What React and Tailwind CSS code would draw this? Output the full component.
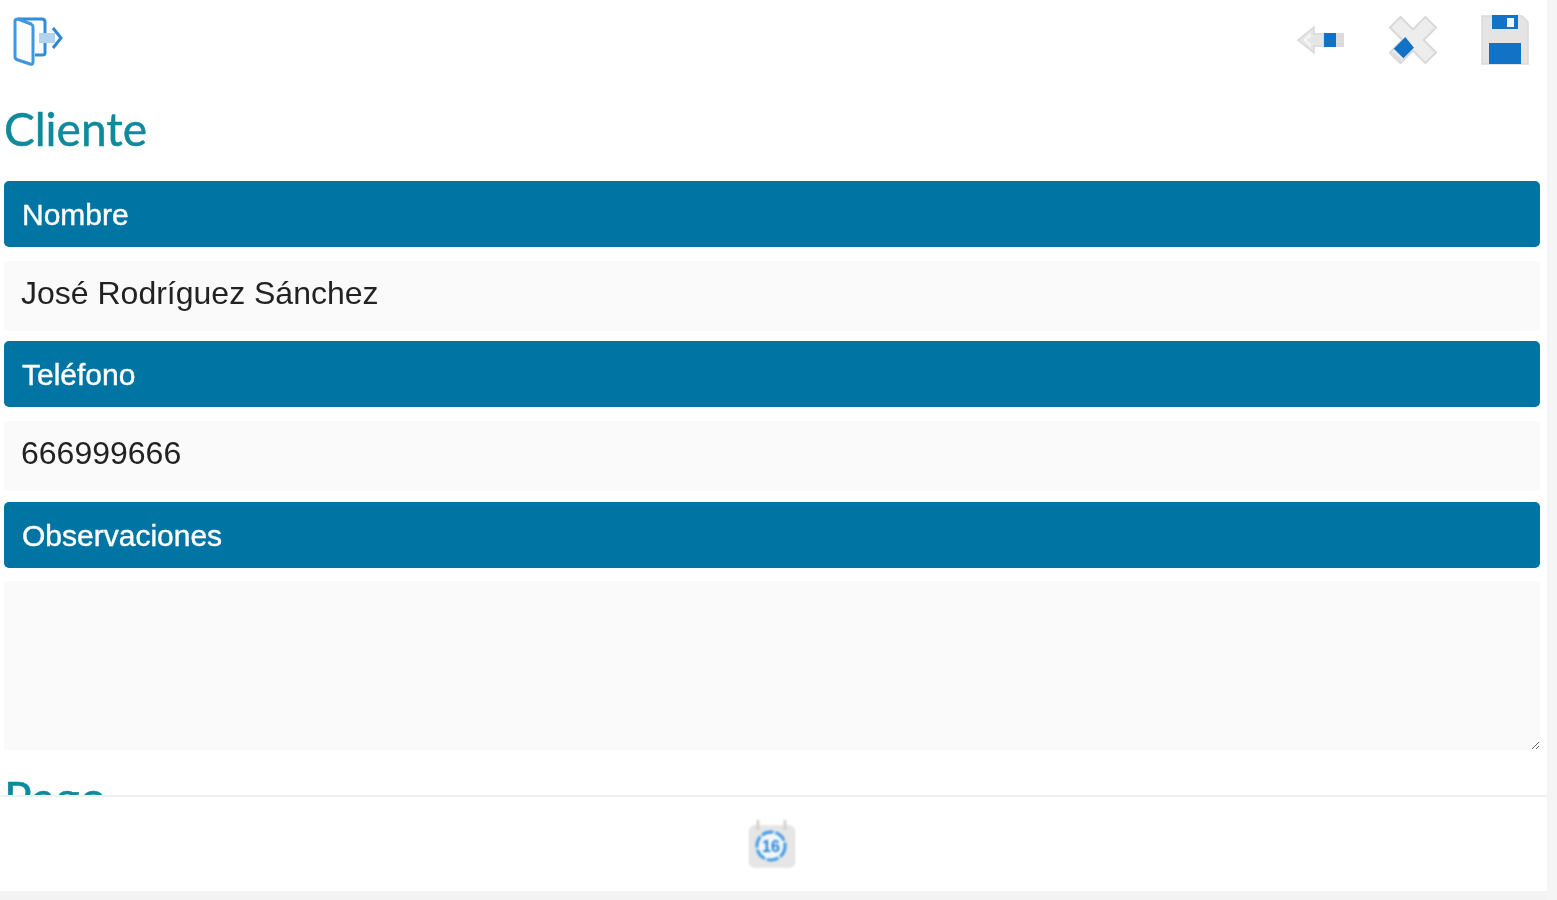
import React from "react";

const ExitIcon = () => (
  <svg width="50" height="50" viewBox="0 0 50 50" fill="none" className="mt-[3px] blur-[0.5px]">
    <path d="M5 3H29Q32 3 32 6V37Q32 39 29 39H22" stroke="#2f8ddc" strokeWidth="3" strokeLinejoin="round" />
    <path d="M2 5Q2 3 5 3L18 8Q20 9 20 11V46Q20 49 17 48L5 44Q2 43 2 41V5Z" stroke="#3f97e0" strokeWidth="3" strokeLinejoin="round" fill="#fff" />
    <path d="M26 17H42V27H26Z" fill="#b4d3ee" />
    <path d="M40 12L48 22L40 32" stroke="#2f86d2" strokeWidth="3" />
  </svg>
);

const BackIcon = () => (
  <svg width="48" height="30" viewBox="0 0 48 30" className="mt-[2px] blur-[0.7px]">
    <path d="M1 15L17 2V9H27V21H17V28L1 15Z" fill="#e6e6e6" stroke="#d8d8d8" strokeWidth="1.5" />
    <path d="M6 15L14 8V12L9 15L14 19V22L6 15Z" fill="#f6f6f6" />
    <rect x="27" y="8" width="12" height="14" fill="#1273c6" />
    <rect x="39" y="8" width="8" height="14" fill="#dcdcdc" />
  </svg>
);

const CancelIcon = () => (
  <svg width="48" height="50" viewBox="0 0 50 50" className="mt-[2px] blur-[0.7px]">
    <path d="M12 1L25 14L38 1L49 12L36 25L49 38L38 49L25 36L12 49L1 38L14 25L1 12Z" fill="#ededed" stroke="#d8d8d8" strokeWidth="2" strokeLinejoin="round" />
    <path d="M5 34L17 22L26 33L15 44Z" fill="#1273c6" />
    <path d="M5 37L13 45L10 49L1 40Z" fill="#dedede" />
  </svg>
);

const SaveIcon = () => (
  <svg width="48" height="50" viewBox="0 0 48 50" className="mt-[2px] blur-[0.7px]">
    <path d="M1 1H41L47 7V49H1Z" fill="#e4e4e4" stroke="#dadada" strokeWidth="1.5" />
    <rect x="11" y="0" width="26" height="14" fill="#1273c6" />
    <rect x="26" y="3" width="7" height="9" fill="#f5f5f5" />
    <rect x="8" y="28" width="32" height="21" fill="#1273c6" />
  </svg>
);

const CalendarIcon = () => (
  <svg width="46" height="48" viewBox="0 0 46 48" className="mr-[4px] blur-[0.8px]">
    <rect x="0.5" y="6" width="45" height="41" rx="5" fill="#e6e6e6" stroke="#dadada" />
    <path d="M9 1V9M36 1V9" stroke="#d2d2d2" strokeWidth="3" strokeLinecap="round" />
    <circle cx="22" cy="26" r="14" fill="#f4f8fc" stroke="#3f97e0" strokeWidth="3" strokeDasharray="12 2" />
    <text x="22" y="32" textAnchor="middle" fontFamily="Liberation Sans, sans-serif" fontSize="16" fontWeight="700" fill="#1f7fd1">
      16
    </text>
  </svg>
);

const Label = ({ children }) => (
  <div className="flex h-[66px] items-center rounded-[5px] bg-[#0074a2] px-[18px] pt-[1px] text-[30px] text-white [-webkit-text-stroke:0.4px_white]">
    <span className="blur-[0.5px]">{children}</span>
  </div>
);

const Field = ({ value }) => (
  <input
    readOnly
    value={value}
    className="block h-[70px] w-full bg-[#fafafa] px-[17px] pb-[6px] text-[32px] text-[#222222] outline-none blur-[0.5px]"
  />
);

const App = () => {
  return (
    <div className="flex h-[900px] w-full overflow-hidden bg-[#f5f5f5] font-['Liberation_Sans',Arial,sans-serif]">
      <div className="flex h-full flex-1 flex-col">
        <main className="h-[795px] overflow-hidden bg-white">
          {/* Top toolbar */}
          <div className="flex h-[90px] items-center justify-between pb-[12px] pl-[13px] pr-[18px]">
            <ExitIcon />
            <div className="flex items-center gap-[44px]">
              <BackIcon />
              <CancelIcon />
              <SaveIcon />
            </div>
          </div>

          <div className="pl-[4px] pr-[7px]">
            <h1 className="h-[91px] pt-[9px] text-[46px] leading-[60px] text-[#0f8a9d] font-['Lato',sans-serif] [-webkit-text-stroke:0.5px_#0f8a9d] blur-[0.5px]">Cliente</h1>

            <Label>Nombre</Label>
            <div className="pb-[10px] pt-[14px]">
              <Field value="José Rodríguez Sánchez" />
            </div>

            <Label>Teléfono</Label>
            <div className="pb-[11px] pt-[14px]">
              <Field value="666999666" />
            </div>

            <Label>Observaciones</Label>
            <textarea readOnly className="mt-[13px] block h-[169px] w-full bg-[#fafafa] outline-none" />

            <h2 className="mt-[18px] text-[46px] leading-[60px] tracking-[1px] text-[#0f8a9d] font-['Lato',sans-serif] [-webkit-text-stroke:0.5px_#0f8a9d] blur-[0.5px]">Pago</h2>
          </div>
        </main>

        {/* Bottom bar */}
        <footer className="flex h-[96px] items-center justify-center border-t-2 border-[#f0f0f0] bg-white">
          <CalendarIcon />
        </footer>
        <div className="h-[9px] bg-[#f3f3f3]" />
      </div>
      <div className="w-[10px] bg-[#f5f5f5]" />
    </div>
  );
};

export default App;
